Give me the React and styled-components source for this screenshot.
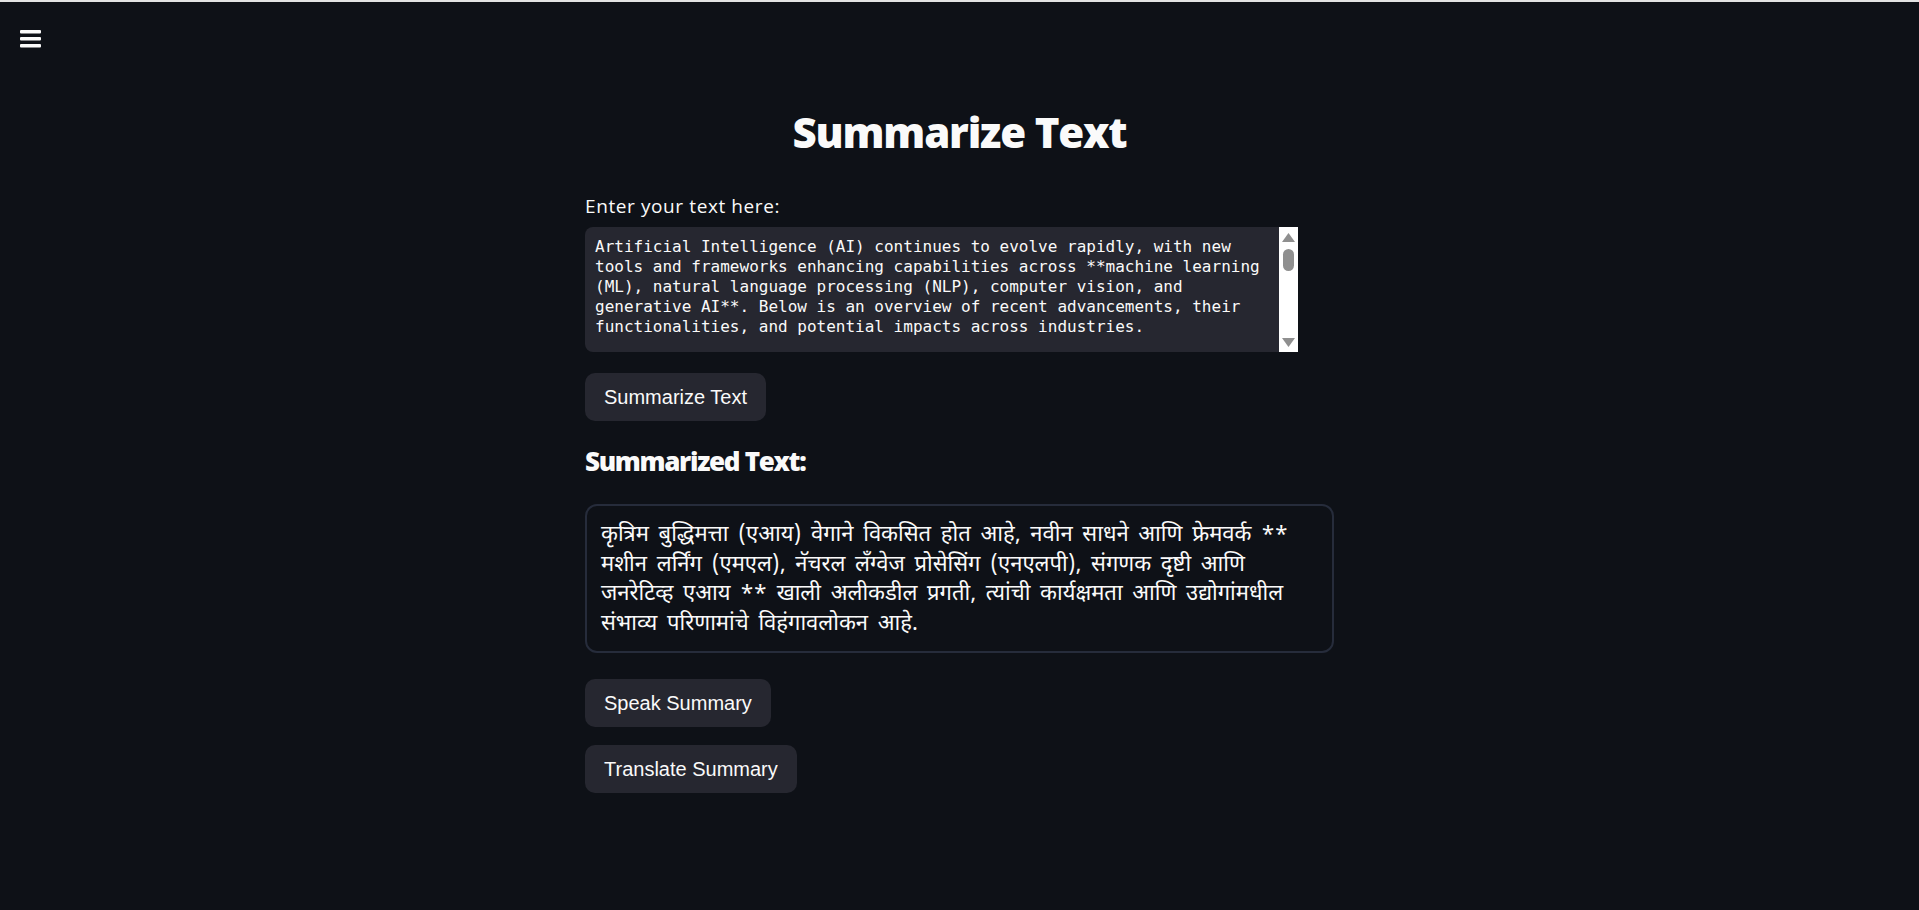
import React from 'react';
import styled, { createGlobalStyle } from 'styled-components';

const GlobalStyle = createGlobalStyle`
  html, body {
    margin: 0;
    padding: 0;
    background-color: #0e1117;
  }
  body {
    font-family: 'Open Sans', 'Liberation Sans', sans-serif;
    color: #fafafa;
    min-height: 910px;
  }
`;

const TopStrip = styled.div`
  height: 2px;
  background-color: #e3e3e3;
`;

const MenuButton = styled.button`
  position: fixed;
  top: 30px;
  left: 20px;
  width: 21px;
  height: 18px;
  padding: 0;
  border: none;
  background: none;
  cursor: pointer;
  display: flex;
`;

const Column = styled.main`
  width: 749px;
  margin: 0 auto;
  display: flex;
  flex-direction: column;
  align-items: flex-start;
`;

const Title = styled.h1`
  align-self: stretch;
  margin: 102px 0 0;
  text-align: center;
  font-family: 'Open Sans', sans-serif;
  font-weight: 800;
  font-size: 42px;
  line-height: 56px;
  letter-spacing: -1.2px;
  color: #fafafa;
`;

const Label = styled.label`
  margin-top: 34px;
  font-family: 'Open Sans', sans-serif;
  font-size: 19px;
  line-height: 24px;
  letter-spacing: 0.6px;
  color: #fafafa;
`;

const InputBox = styled.div`
  margin-top: 9px;
  width: 713px;
  height: 125px;
  display: flex;
  background-color: #262730;
  border-radius: 8px 0 0 8px;
  overflow: hidden;
`;

const TextArea = styled.textarea`
  flex: 1;
  height: 100%;
  box-sizing: border-box;
  margin: 0;
  padding: 10px 12px 10px 10px;
  border: none;
  outline: none;
  resize: none;
  overflow: hidden;
  background: transparent;
  color: #fafafa;
  font-family: 'DejaVu Sans Mono', 'Liberation Mono', monospace;
  font-size: 16px;
  line-height: 20px;
`;

const ScrollTrack = styled.div`
  width: 19px;
  background-color: #ffffff;
  display: flex;
  flex-direction: column;
  align-items: center;
  justify-content: space-between;
  padding: 6px 0 5px;
  box-sizing: border-box;
`;

const ThumbArea = styled.div`
  flex: 1;
  width: 100%;
  display: flex;
  justify-content: center;
  padding-top: 7px;
`;

const Thumb = styled.div`
  width: 11px;
  height: 22px;
  border-radius: 6px;
  background-color: #8f8f8f;
`;

const Button = styled.button`
  margin-top: ${(p) => p.$gap}px;
  height: 48px;
  padding: 0 19px;
  border: none;
  border-radius: 10px;
  background-color: #262730;
  color: #fafafa;
  font-family: 'Liberation Sans', Arial, sans-serif;
  font-size: 20px;
  cursor: pointer;
`;

const SubHeading = styled.h3`
  margin: 22px 0 0;
  font-family: 'Open Sans', sans-serif;
  font-weight: 800;
  font-size: 26px;
  line-height: 36px;
  letter-spacing: -1.3px;
  color: #fafafa;
`;

const SummaryBox = styled.div`
  margin-top: 25px;
  align-self: stretch;
  box-sizing: border-box;
  height: 149px;
  padding: 15px 14px 11px;
  border: 2px solid #262c3b;
  border-radius: 12px;
  font-family: 'Noto Sans Devanagari', 'Nirmala UI', 'Noto Sans', 'Liberation Sans', sans-serif;
  font-size: 22px;
  line-height: 29.5px;
  word-spacing: 4px;
  white-space: nowrap;
  color: #fafafa;
`;

function Arrow({ up }) {
  return (
    <svg width="13" height="9" viewBox="0 0 13 9">
      <polygon points={up ? '6.5,0 13,9 0,9' : '0,0 13,0 6.5,9'} fill="#8f8f8f" />
    </svg>
  );
}

const inputText =
  'Artificial Intelligence (AI) continues to evolve rapidly, with new tools and frameworks enhancing capabilities across **machine learning (ML), natural language processing (NLP), computer vision, and generative AI**. Below is an overview of recent advancements, their functionalities, and potential impacts across industries.\n\n---\n\n### 1. Advanced AI Frameworks and Tools\n\n#### **a. TensorFlow 2.x and PyTorch 2.0**\n- **Functionality**: Both frameworks now support dynamic computation graphs, improved GPU utilization, and simplified model deployment.\n- **Impact**: Faster experimentation and production-ready pipelines for researchers and enterprises.\n\n#### **b. Hugging Face Transformers**\n- **Functionality**: Provides thousands of pre-trained models for NLP, vision and audio tasks.\n- **Impact**: Democratizes access to state-of-the-art models.';

// line breaks follow the rendered summary
const summaryLines = [
  'कृत्रिम बुद्धिमत्ता (एआय) वेगाने विकसित होत आहे, नवीन साधने आणि फ्रेमवर्क **',
  'मशीन लर्निंग (एमएल), नॅचरल लँग्वेज प्रोसेसिंग (एनएलपी), संगणक दृष्टी आणि',
  'जनरेटिव्ह एआय ** खाली अलीकडील प्रगती, त्यांची कार्यक्षमता आणि उद्योगांमधील',
  'संभाव्य परिणामांचे विहंगावलोकन आहे.',
];

export default function App() {
  return (
    <>
      <GlobalStyle />
      <TopStrip />
      <MenuButton aria-label="menu">
        <svg width="21" height="18" viewBox="0 0 21 18">
          <rect x="0" y="0" width="21" height="3.6" rx="1" fill="#fafafa" />
          <rect x="0" y="7" width="21" height="3.6" rx="1" fill="#fafafa" />
          <rect x="0" y="14" width="21" height="3.6" rx="1" fill="#fafafa" />
        </svg>
      </MenuButton>
      <Column>
        <Title>Summarize Text</Title>
        <Label htmlFor="input-text">Enter your text here:</Label>
        <InputBox>
          <TextArea id="input-text" readOnly value={inputText} />
          <ScrollTrack>
            <Arrow up />
            <ThumbArea>
              <Thumb />
            </ThumbArea>
            <Arrow />
          </ScrollTrack>
        </InputBox>
        <Button $gap={21}>Summarize Text</Button>
        <SubHeading>Summarized Text:</SubHeading>
        <SummaryBox>
          {summaryLines.map((line, i) => (
            <React.Fragment key={i}>
              {line}
              {i < summaryLines.length - 1 && <br />}
            </React.Fragment>
          ))}
        </SummaryBox>
        <Button $gap={26}>Speak Summary</Button>
        <Button $gap={18}>Translate Summary</Button>
      </Column>
    </>
  );
}
